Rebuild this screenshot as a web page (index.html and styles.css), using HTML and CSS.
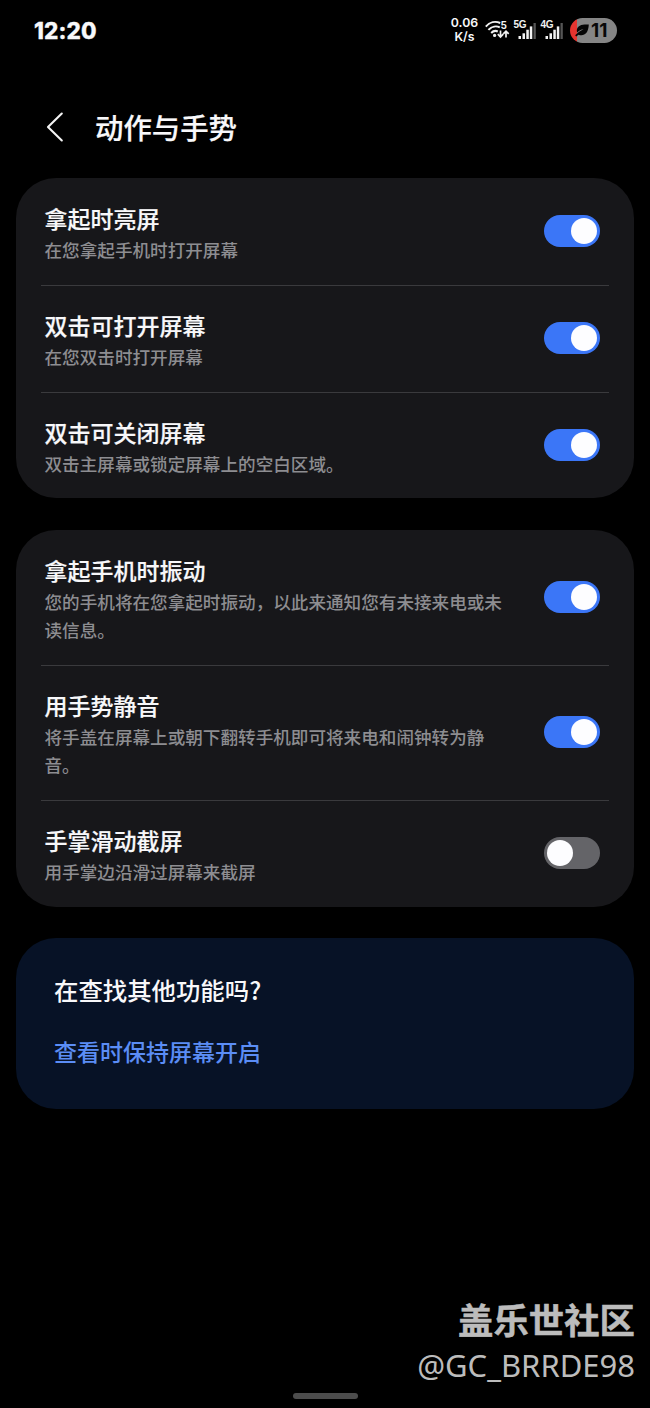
FILE: index.html
```
<!DOCTYPE html>
<html lang="zh-CN">
<head>
<meta charset="utf-8">
<title>动作与手势</title>
<link rel="stylesheet" href="styles.css">
</head>
<body>
<div class="screen">
  <header class="status">
    <span class="clock">12:20</span>
    <div class="indicators">
      <div class="speed"><span>0.06</span><span>K/s</span></div>
      <svg class="wifi" width="26" height="20" viewBox="0 0 26 20">
        <g fill="none" stroke="#f2f2f2" stroke-width="2">
          <path d="M.8 6.600C4.800 2 10.500 1 15.200 3"/>
          <path d="M3.400 9.900C6.800 6.300 11.400 5.600 14.800 7.400"/>
          <path d="M6.200 13c2-2.100 4.600-2.500 6.600-1.500"/>
          <path d="M15.500 10.500v6.300M12.800 14.200l2.700 2.800 2.700-2.800M21 17.500v-6.300M18.300 13.900l2.700-2.800 2.700 2.800" stroke-width="1.700"/>
        </g>
        <circle cx="9.600" cy="15.400" r="1.600" fill="#f2f2f2"/>
        <text class="wifi-gen" x="15.400" y="9">5</text>
      </svg>
      <svg class="signal" width="24" height="20" viewBox="0 0 24 20">
        <text class="net" x="-.5" y="8.300">5G</text>
        <g fill="#f2f2f2"><rect x="4.500" y="16" width="2.500" height="3"/><rect x="8.500" y="13.300" width="2.500" height="5.700"/><rect x="12.300" y="9.700" width="2.500" height="9.300"/><rect x="15.800" y="6.400" width="2.500" height="12.600"/></g>
        <rect x="19.500" y="3" width="2.300" height="16" fill="#555"/>
      </svg>
      <svg class="signal signal-second" width="24" height="20" viewBox="0 0 24 20">
        <text class="net" x="-.5" y="8.300">4G</text>
        <g fill="#f2f2f2"><rect x="4.500" y="16" width="2.500" height="3"/><rect x="8.500" y="13.300" width="2.500" height="5.700"/><rect x="12.300" y="9.700" width="2.500" height="9.300"/><rect x="15.800" y="6.400" width="2.500" height="12.600"/></g>
        <rect x="19.500" y="3" width="2.300" height="16" fill="#555"/>
      </svg>
      <div class="battery">
        <svg width="14" height="13" viewBox="0 0 14 13">
          <path d="M13.800.6C8 .2 2.200 1 1.800 6.200c0 1 .1 1.600.4 2.200C4 6.800 6 5.600 8.600 5 5.400 6.800 2.600 8.800.2 11.200l1 1.300 2.300-1.700c5.400 1.800 9.900-1 10.300-10.200z" fill="#050505"/>
        </svg>
        <span>11</span>
      </div>
    </div>
  </header>

  <div class="titlebar">
    <svg width="18" height="30" viewBox="0 0 18 30"><path d="M15.800 1.500 2 15l13.800 13.500" fill="none" stroke="#f4f4f4" stroke-width="2.100" stroke-linecap="round" stroke-linejoin="round"/></svg>
    <h1>动作与手势</h1>
  </div>

  <main class="content">
    <section class="card">
      <div class="row">
        <div class="label"><h2>拿起时亮屏</h2><p>在您拿起手机时打开屏幕</p></div>
        <div class="toggle on"></div>
      </div>
      <div class="row">
        <div class="label"><h2>双击可打开屏幕</h2><p>在您双击时打开屏幕</p></div>
        <div class="toggle on"></div>
      </div>
      <div class="row">
        <div class="label"><h2>双击可关闭屏幕</h2><p>双击主屏幕或锁定屏幕上的空白区域。</p></div>
        <div class="toggle on"></div>
      </div>
    </section>

    <section class="card">
      <div class="row tall">
        <div class="label"><h2>拿起手机时振动</h2><p>您的手机将在您拿起时振动，以此来通知您有未接来电或未<br>读信息。</p></div>
        <div class="toggle on"></div>
      </div>
      <div class="row tall">
        <div class="label"><h2>用手势静音</h2><p>将手盖在屏幕上或朝下翻转手机即可将来电和闹钟转为静<br>音。</p></div>
        <div class="toggle on"></div>
      </div>
      <div class="row">
        <div class="label"><h2>手掌滑动截屏</h2><p>用手掌边沿滑过屏幕来截屏</p></div>
        <div class="toggle"></div>
      </div>
    </section>

    <section class="card tips">
      <h2>在查找其他功能吗?</h2>
      <a class="link">查看时保持屏幕开启</a>
    </section>
  </main>

  <footer class="footer">
    <div class="community">盖乐世社区</div>
    <div class="author">@GC_BRRDE98</div>
    <div class="handle"></div>
  </footer>
</div>
</body>
</html>
```
FILE: styles.css
```
* { box-sizing: border-box; }
body { margin: 0; background: #000; }
h1, h2, p { margin: 0; font-weight: 500; }
.screen {
  width: 650px;
  height: 1408px;
  display: flex;
  flex-direction: column;
  overflow: hidden;
  background: #000;
  color: #f8f8fa;
  font-family: "Noto Sans CJK SC", sans-serif;
}
.status {
  height: 60px;
  padding: 0 33px 0 34px;
  display: flex;
  align-items: center;
  justify-content: space-between;
  font-family: Inter, "Noto Sans", sans-serif;
}
.clock { font-size: 22.5px; font-weight: 800; letter-spacing: 0.1px; -webkit-text-stroke: 0.3px currentColor; }
.indicators { display: flex; align-items: center; }
.speed {
  display: flex;
  flex-direction: column;
  align-items: center;
  font-size: 12.3px;
  line-height: 14px;
  font-weight: 600;
  width: 27px;
  margin-right: 7px;
}
.wifi-gen { font: 700 10px Inter, sans-serif; fill: #f2f2f2; }
.wifi { margin-right: 3px; }
.signal { overflow: visible; }
.signal-second { margin-left: 3px; margin-right: 5px; }
.net { font: 700 10px "Liberation Sans", sans-serif; fill: #f2f2f2; letter-spacing: -0.4px; }
.battery {
  width: 47px;
  height: 25px;
  border-radius: 13px;
  display: flex;
  align-items: center;
  gap: 2px;
  padding-left: 5px;
  background: linear-gradient(90deg, #e5342f 7px, #858585 7px);
  color: #080808;
  font-size: 19px;
  font-weight: 700;
}
.titlebar {
  height: 118px;
  padding: 16px 0 0 46px;
  display: flex;
  align-items: center;
  gap: 31px;
}
.titlebar h1 { font-size: 28.4px; line-height: 42px; -webkit-text-stroke: 0.2px currentColor; }
.content { display: flex; flex-direction: column; gap: 32px; padding: 0 16px; }
.card { border-radius: 40px; background: #17171a; padding: 0 25px; }
.row {
  height: 107px;
  padding: 23px 9px 0 3.5px;
  display: grid;
  grid-template-columns: 1fr 56px;
}
.row.tall { height: 135px; }
.row:last-child { height: 106px; }
.card:nth-child(2) .row:last-child { height: 107px; }
.row + .row { border-top: 1px solid #3a3a3d; padding-top: 22px; }
.label h2 { font-size: 23px; line-height: 34px; white-space: nowrap; -webkit-text-stroke: 0.2px currentColor; }
.label p { margin-top: 1px; font-size: 17.6px; line-height: 27.5px; color: #8d8d91; white-space: nowrap; }
.toggle {
  width: 56px;
  height: 32px;
  border-radius: 16px;
  background: #646468;
  display: flex;
  align-items: center;
  padding: 0 3px;
  align-self: center;
  margin-top: -24px;
}
.toggle::before { content: ""; width: 26px; height: 26px; border-radius: 50%; background: #fdfdff; }
.toggle.on { background: #3b76f7; justify-content: flex-end; }
.tips { height: 171px; padding: 35px 38px 0; margin-top: -1px; background: #071226; display: flex; flex-direction: column; gap: 27px; }
.tips h2 { font-size: 24.4px; line-height: 34px; }
.link { font-size: 23px; line-height: 34px; font-weight: 500; color: #5b8df5; }
.footer {
  margin-top: auto;
  display: flex;
  flex-direction: column;
  align-items: flex-end;
  padding: 0 15px 9px 0;
  color: #bcbcbc;
}
.community { font-size: 35.4px; line-height: 46px; font-weight: 700; margin-bottom: 2px; -webkit-text-stroke: 0.5px currentColor; }
.author { font-family: "Noto Sans", sans-serif; font-size: 31px; line-height: 42px; }
.handle { width: 65px; height: 6px; border-radius: 3px; background: #4c4c4c; align-self: center; margin: 7px 0 0 15px; }
```
